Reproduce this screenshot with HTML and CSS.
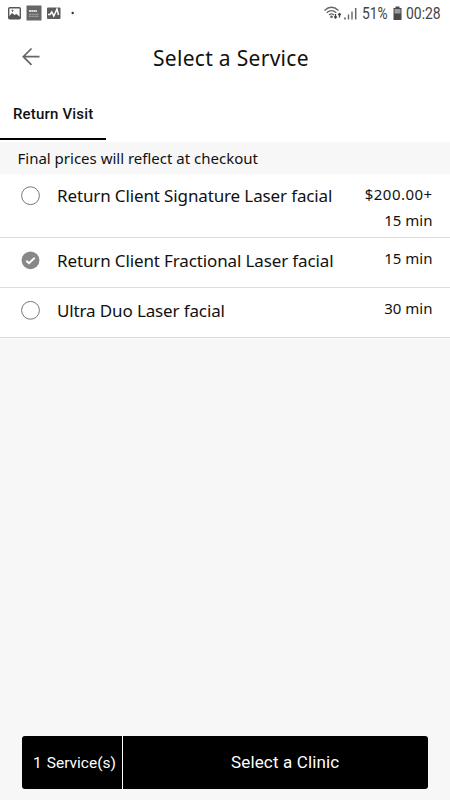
FILE: index.html
```html
<!DOCTYPE html>
<html lang="en">
<head>
<meta charset="utf-8">
<title>Select a Service</title>
<link rel="stylesheet" href="styles.css">
</head>
<body>
<div class="status">
  <svg class="notices" width="80" height="28" viewBox="0 0 80 28">
    <rect x="8.700" y="7.700" width="11.600" height="11" rx="1" fill="#fff" stroke="#555" stroke-width="1.400"/>
    <path d="M9 18v-1.500l3-3.500 2.500 2 2-1 3.500 3v1z" fill="#555"/><path d="M12.500 9.500v2.500M11.500 10.500h2" stroke="#777"/>
    <rect x="26.500" y="5.500" width="15" height="15" fill="#666"/>
    <path d="M29 11h8" stroke="#fff" stroke-width="1.700" stroke-dasharray="2 .3"/>
    <path d="M29 14.300h10M29 16.300h10" stroke="#aaa" stroke-width="1" stroke-dasharray="2 .4"/>
    <rect x="47" y="7.500" width="13.500" height="11.500" rx="1" fill="#5c5c5c"/>
    <path d="M48 14.500h2l1.800-2.500 2 4 3.200-7 1.500 6" fill="none" stroke="#fff" stroke-width="1.500"/>
    <circle cx="72.700" cy="13" r="1.200" fill="#333"/>
  </svg>
  <div class="system">
    <svg width="34" height="28" viewBox="0 0 34 28" fill="none" stroke="#666" stroke-width="1.300">
      <path d="M.5 10.500q7-6.500 14 0M2.700 12.800q4.800-4.300 9.600 0M5 15q2.500-2.200 5 0"/>
      <circle cx="7.500" cy="16.800" r=".7" fill="#555"/>
      <path d="M11.500 14v4M10.200 16.500l1.300 1.500 1.300-1.500M15.500 17.500v-4M14.200 15l1.300-1.500 1.300 1.500" stroke="#444"/>
      <path d="M21 17.500v2" stroke="#555" stroke-width="1.500"/><path d="M24.500 14.500v5M28 11.500v8" stroke-width="1.400"/><path d="M31.700 8v11.500" stroke-width="1.500"/>
    </svg>
    <span class="percent">51%</span>
    <svg class="battery" width="9" height="28" viewBox="0 0 9 28">
      <path d="M2.500 6.500h4V8h2v12H.5V8h2z" fill="#484848"/><path d="M1.500 9h6v4.500h-6z" fill="#999"/>
    </svg>
    <span class="clock">00:28</span>
  </div>
</div>
<header class="header">
  <svg class="back" width="20" height="20" viewBox="0 0 20 20" fill="none" stroke="#666" stroke-width="1.700"><path d="M17.500 9.700H1.500M9.500 1.500L1.300 9.700l8.200 8.200"/></svg>
  <h1 class="title">Select a Service</h1>
</header>
<nav class="tabs"><div class="tab">Return Visit</div></nav>
<div class="note">Final prices will reflect at checkout</div>
<main class="list">
  <div class="row row-tall">
    <svg class="radio" width="20" height="20" viewBox="0 0 20 20"><circle cx="9.500" cy="9.700" r="8.900" fill="#fff" stroke="#777"/></svg>
    <span class="name">Return Client Signature Laser facial</span>
    <div class="meta"><span class="price">$200.00+</span><span class="time">15 min</span></div>
  </div>
  <div class="row">
    <svg class="radio" width="20" height="20" viewBox="0 0 20 20"><circle cx="9.500" cy="9.300" r="8.900" fill="#888"/><path d="M5.300 9.800l2.700 2.500 5.700-5.500" fill="none" stroke="#fff" stroke-width="1.900"/></svg>
    <span class="name">Return Client Fractional Laser facial</span>
    <div class="meta"><span class="time">15 min</span></div>
  </div>
  <div class="row">
    <svg class="radio" width="20" height="20" viewBox="0 0 20 20"><circle cx="9.500" cy="9.300" r="8.900" fill="#fff" stroke="#777"/></svg>
    <span class="name">Ultra Duo Laser facial</span>
    <div class="meta"><span class="time">30 min</span></div>
  </div>
</main>
<footer class="footer">
  <div class="count"><span>1</span><span>Service(s)</span></div>
  <div class="next">Select a Clinic</div>
</footer>
</body>
</html>
```
FILE: styles.css
```css
* { box-sizing: border-box; }
body {
  margin: 0;
  height: 800px;
  display: flex;
  flex-direction: column;
  overflow: hidden;
  background: #f7f7f7;
  color: #111;
  font-family: "Noto Sans", sans-serif;
  white-space: nowrap;
}
.status {
  height: 28px;
  display: flex;
  justify-content: space-between;
  background: #fff;
  color: #444;
  font: 16px/28px Roboto, sans-serif;
}
.system { display: flex; width: 126px; }
.percent { margin-left: 4px; width: 26px; font-size: 16px; transform: scaleX(.86); transform-origin: left; }
.battery { margin-left: 4.5px; }
.clock { margin-left: 4px; transform: scaleX(.87); transform-origin: left; }
.header {
  height: 62px;
  padding: 0 22px;
  display: flex;
  align-items: flex-start;
  background: #fff;
}
.back { margin-top: 19px; }
.title {
  margin: 15px 0 0 111px;
  font-size: 21px;
  font-weight: 400;
  letter-spacing: .3px;
  line-height: 31px;
}
.tabs { height: 52px; background: #fff; }
.tab {
  width: 106px;
  height: 50px;
  padding-left: 13px;
  border-bottom: 2px solid #000;
  font: 500 15px/49px Roboto, sans-serif;
  letter-spacing: .18px;
}
.note { height: 32px; padding-left: 17.500px; font-size: 15px; line-height: 33px; }
.list { background: #fff; }
.row {
  height: 50px;
  padding: 12px 17.500px 0 21px;
  display: flex;
  align-items: flex-start;
  border-bottom: 1px solid #ddd;
}
.row-tall { height: 64px; padding-top: 11px; }
.radio { margin-top: 1px; }
.name { margin-left: 16px; font-size: 17px; letter-spacing: -.13px; line-height: 22px; }
.meta {
  margin: -5px 0 0 auto;
  display: flex;
  flex-direction: column;
  align-items: flex-end;
  font-size: 15px;
  line-height: 26px;
}
.row-tall .meta { margin-top: -4px; }
.price { letter-spacing: .45px; }
.footer {
  height: 53px;
  margin: auto 22px 11px;
  display: flex;
  border-radius: 3px;
  overflow: hidden;
  background: #000;
  color: #fff;
  font-family: Roboto, sans-serif;
}
.count {
  width: 101px;
  padding-left: 11px;
  display: flex;
  gap: 5px;
  border-right: 1.500px solid #fff;
  font-size: 15.500px;
  line-height: 54px;
}
.next { flex: 1; padding-left: 108px; font-size: 17px; letter-spacing: .15px; line-height: 53px; }
```
